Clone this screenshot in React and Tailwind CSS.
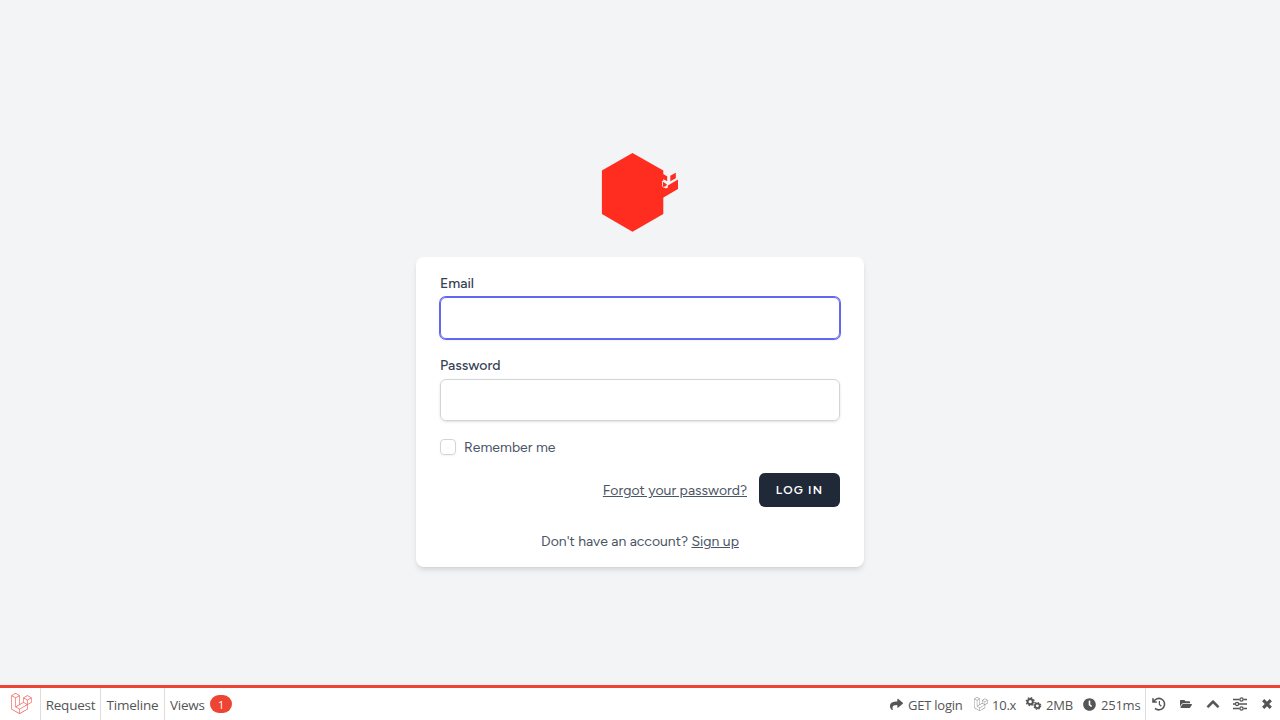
import React from "react";
import { FaShare, FaClock, FaFolderOpen, FaChevronUp, FaLaravel } from "react-icons/fa";

function Logo() {
  return (
    <svg className="h-20 w-20" viewBox="600 152 80 80">
      <path fill="#ff2d20" d="M632.5 153 663.3 170.6V214L632.5 231.7 601.9 214V170.6Z" />
      <path fill="#ff2d20" d="M662 173.4 667.2 176.2V181.2L662 178.4Z" />
      <path fill="#ff2d20" d="M670.3 175.8 675.8 172.8V178.2L670.3 181.3Z" />
      <path fill="#ff2d20" d="M663 187.8 667.8 185.6 678 179.6V189L663 197.7Z" />
      <path fill="#f3f4f6" d="M662.2 180.8 663.6 181 668 184 667.6 188 665.5 188.3 662.2 186.6Z" />
      <path fill="#ff2d20" d="M663 181.8 667 184.6 665.8 186.2 663 187.1Z" />
    </svg>
  );
}

function Sliders() {
  return (
    <svg className="h-[14px] w-[14px]" viewBox="0 0 14 14" fill="none" stroke="#555" strokeWidth="1.3">
      <path d="M0 2.5h6.5M10.5 2.5h3.5M0 7h2M6 7h8M0 11.5h6.5M10.5 11.5h3.5" />
      <circle cx="8.5" cy="2.5" r="1.6" /><circle cx="4" cy="7" r="1.6" /><circle cx="8.5" cy="11.5" r="1.6" />
    </svg>
  );
}

function LoginCard() {
  return (
    <form className="mt-[25px] h-[310px] w-[448px] rounded-lg bg-white px-6 py-4 text-sm text-gray-600 shadow-md">
      <label className="block h-5 font-medium leading-[22px] text-gray-700">Email</label>
      <input className="mt-1 block h-[42px] w-full rounded-md border border-[#6366f1] px-3 shadow-sm ring-1 ring-[#6366f1] outline-none" />
      <label className="mt-4 block h-5 font-medium leading-[22px] text-gray-700">Password</label>
      <input type="password" className="mt-1 block h-[42px] w-full rounded-md border border-[#d1d5db] px-3 shadow-sm outline-none" />
      <label className="mt-4 flex h-5 items-center">
        <input type="checkbox" className="h-4 w-4 appearance-none rounded border border-[#d1d5db] shadow-xs" />
        <span className="ml-2 leading-[22px] pt-0.5">Remember me</span>
      </label>
      <div className="mt-4 flex h-[34px] items-center justify-end">
        <a className="pt-0.5 underline">Forgot your password?</a>
        <button type="button" className="ml-3 h-[34px] w-[81px] rounded-md bg-[#1f2937] text-xs font-semibold tracking-widest text-white">LOG IN</button>
      </div>
      <div className="mt-[25px] text-center">Don't have an account? <a className="underline">Sign up</a></div>
    </form>
  );
}

function DebugBar() {
  return (
    <footer className="flex h-[35px] shrink-0 border-t-[3px] border-[#ee4433] bg-white font-['Open_Sans','Noto_Sans',sans-serif] text-[13.5px] tracking-[-0.23px] text-[#555]">
      <div className="flex w-[41px] items-center justify-center border-r border-[#ddd] pb-[2px] pl-[2px]"><FaLaravel className="h-[21px] w-[21px] text-[#f4645f]" /></div>
      <div className="flex w-[60px] items-center justify-center border-r border-[#ddd] pt-[3px]">Request</div>
      <div className="flex w-[64px] items-center justify-center border-r border-[#ddd] pt-[3px]">Timeline</div>
      <div className="flex items-center pl-[5px]"><span className="w-[40px] pt-[3px]">Views</span><span className="flex h-[18px] w-[22px] items-center justify-center rounded-full bg-[#ee4433] pt-[2px] text-[11px] text-white">1</span></div>
      <div className="ml-auto flex h-full items-center border-r border-[#ddd] pr-[6px] text-[13px]">
        <FaShare className="h-[13px] w-[13px]" /><span className="ml-[5px] w-[56px] whitespace-nowrap pt-[3px]">GET login</span>
        <FaLaravel className="ml-[10px] h-[14px] w-[14px] text-[#888]" /><span className="ml-1 w-[23px] whitespace-nowrap pt-[3px]">10.x</span>
        <svg className="ml-[10px] h-[14px] w-[17px]" viewBox="0 0 17 15" fill="none" stroke="#555">
          <circle cx="5" cy="5" r="2.8" strokeWidth="2.1" /><circle cx="5" cy="5" r="4.2" strokeWidth="1.4" strokeDasharray="1.7 1.6" />
          <circle cx="12.6" cy="9.5" r="2.5" strokeWidth="1.9" /><circle cx="12.6" cy="9.5" r="3.7" strokeWidth="1.2" strokeDasharray="1.5 1.4" />
        </svg><span className="ml-1 w-[26px] whitespace-nowrap pt-[3px]">2MB</span>
        <FaClock className="ml-[11px] h-[13px] w-[13px]" /><span className="ml-[5px] w-[38px] whitespace-nowrap pt-[3px]">251ms</span>
      </div>
      <div className="flex h-full w-[134px] items-center pl-[6px]">
        <svg className="h-[14px] w-[14px]" viewBox="0 0 14 14" fill="none" stroke="#555" strokeWidth="1.6">
          <path d="M1.6 5A5.7 5.7 0 1 1 3 11.3M1 1.2V5H4.8" /><path strokeWidth="1.2" d="M7.4 4V7.4L9.4 9.2" />
        </svg>
        <FaFolderOpen className="ml-[14px] h-[12px] w-[12px]" />
        <FaChevronUp className="ml-[14px] h-[14px] w-[14px]" stroke="#555" strokeWidth="20" />
        <span className="ml-[13px]"><Sliders /></span>
        <svg className="ml-[15px] h-[10px] w-[10px]" viewBox="0 0 10 10" stroke="#555" strokeWidth="3.2"><path d="M1.2 1.2 8.8 8.8M8.8 1.2 1.2 8.8" /></svg>
      </div>
    </footer>
  );
}

export default function App() {
  return (
    <div className="flex h-screen flex-col overflow-hidden bg-[#f3f4f6] font-['Figtree','Inter','Liberation_Sans',sans-serif]">
      <main className="flex flex-1 flex-col items-center pt-[152px]"><Logo /><LoginCard /></main>
      <DebugBar />
    </div>
  );
}
